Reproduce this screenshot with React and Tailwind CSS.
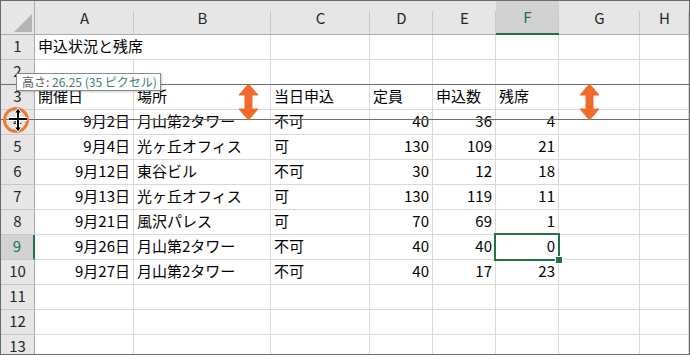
import React from 'react';

const letters = ['A', 'B', 'C', 'D', 'E', 'F', 'G', 'H'];

// 各行のセル内容（A〜F）
const data = {
  1: ['申込状況と残席'],
  3: ['開催日', '場所', '当日申込', '定員', '申込数', '残席'],
  4: ['9月2日', '月山第2タワー', '不可', 40, 36, 4],
  5: ['9月4日', '光ヶ丘オフィス', '可', 130, 109, 21],
  6: ['9月12日', '東谷ビル', '不可', 30, 12, 18],
  7: ['9月13日', '光ヶ丘オフィス', '可', 130, 119, 11],
  8: ['9月21日', '風沢パレス', '可', 70, 69, 1],
  9: ['9月26日', '月山第2タワー', '不可', 40, 40, 0],
  10: ['9月27日', '月山第2タワー', '不可', 40, 17, 23],
};

const rightAligned = (row, col) => row >= 4 && (col === 0 || col >= 3);

const OrangeArrow = ({ className }) => (
  <svg className={className} width="19" height="36" viewBox="0 0 19 36">
    <polygon
      points="9.5,0 19,11 13,11 13,25 19,25 9.5,36 0,25 6,25 6,11 0,11"
      fill="#f26a2b"
      stroke="#f26a2b"
      strokeLinejoin="round"
      strokeWidth="1"
    />
  </svg>
);

const App = () => {
  const rowNums = Array.from({ length: 13 }, (_, i) => i + 1);

  return (
    <div className="relative w-[690px] h-[355px] overflow-hidden bg-white border border-[#6b6b6b] font-['Noto_Sans_CJK_JP',sans-serif] text-[15px] text-black">
      <div className="grid grid-cols-[34px_99px_137px_99px_63px_63px_63px_81px_1fr] grid-rows-[34px_repeat(13,25px)]">
        {/* corner */}
        <div className="relative bg-[#e6e6e6] border-r border-b border-[#ababab]">
          <svg className="absolute right-[2px] bottom-[2px]" width="18" height="18" viewBox="0 0 18 18">
            <polygon points="18,0 18,18 0,18" fill="#b4b4b4" />
          </svg>
        </div>
        {letters.map((l) => (
          <div
            key={l}
            className={`relative flex items-center justify-center leading-none pb-[1px] after:absolute after:right-0 after:top-[10px] after:bottom-0 after:w-px after:bg-[#c8c8c8] ${
              l === 'F'
                ? 'bg-[#d2d2d2] border-b-2 border-[#217346] text-[#217346]'
                : 'bg-[#e6e6e6] border-b border-[#ababab] text-[#262626]'
            }`}
          >
            {l}
          </div>
        ))}

        {rowNums.map((r) => (
          <React.Fragment key={r}>
            <div
              className={`flex items-center justify-center leading-none pb-[3px] border-b border-[#c8c8c8] ${
                r === 9
                  ? 'bg-[#d2d2d2] border-r-2 border-r-[#217346] text-[#217346]'
                  : 'bg-[#e6e6e6] border-r border-r-[#ababab] text-[#262626]'
              }`}
            >
              {r}
            </div>
            {letters.map((l, c) => {
              const v = data[r] ? data[r][c] : undefined;
              const noRight = r === 1 && c === 0;
              return (
                <div
                  key={l}
                  className={`flex items-center leading-none whitespace-nowrap px-[3px] pb-[3px] border-b border-[#d9d9d9] ${
                    noRight ? '' : 'border-r'
                  } ${rightAligned(r, c) ? 'justify-end' : 'justify-start'}`}
                >
                  {v}
                </div>
              );
            })}
          </React.Fragment>
        ))}
      </div>

      {/* selected cell F9 */}
      <div className="absolute left-[493px] top-[232px] w-[66px] h-[28px] border-2 border-[#217346]" />
      <div className="absolute left-[554px] top-[255px] w-[8px] h-[8px] bg-white p-px">
        <div className="w-full h-full bg-[#217346]" />
      </div>

      {/* resize guide lines */}
      <div className="absolute left-0 right-0 top-[83px] h-px bg-[#6e6e6e]" />
      <div className="absolute left-0 right-0 top-[118px] h-px bg-[#6e6e6e]" />

      {/* orange arrows */}
      <OrangeArrow className="absolute left-[238px] top-[83px]" />
      <OrangeArrow className="absolute left-[579px] top-[83px]" />

      {/* tooltip */}
      <div className="absolute left-[15px] top-[72px] h-[18px] pl-[5px] pr-[3px] flex items-center bg-white border border-[#8a8a8a] shadow-[1px_1px_2px_rgba(0,0,0,0.2)] text-[12px] leading-none whitespace-nowrap">
        <span className="text-[#5a5a5a]">高さ:&nbsp;</span>
        <span className="text-[#3b7d73]">26.25 (35 ピクセル)</span>
      </div>

      {/* cursor with orange circle */}
      <div className="absolute left-[2px] top-[106px] w-[26px] h-[26px] rounded-full border-[3px] border-[#f07a30]" />
      <svg className="absolute left-[4px] top-[105px]" width="26" height="28" viewBox="0 0 26 28">
        <g stroke="#fff" strokeWidth="4" fill="none">
          <line x1="4" y1="13" x2="22" y2="13" />
          <line x1="13" y1="5" x2="13" y2="23" />
        </g>
        <polygon points="13,2 9.5,7 16.5,7" fill="#000" stroke="#fff" strokeWidth="1" />
        <polygon points="13,26 9.5,21 16.5,21" fill="#000" stroke="#fff" strokeWidth="1" />
        <g stroke="#000" strokeWidth="2" fill="none">
          <line x1="4" y1="13" x2="22" y2="13" />
          <line x1="13" y1="6" x2="13" y2="22" />
        </g>
      </svg>
    </div>
  );
};

export default App;
